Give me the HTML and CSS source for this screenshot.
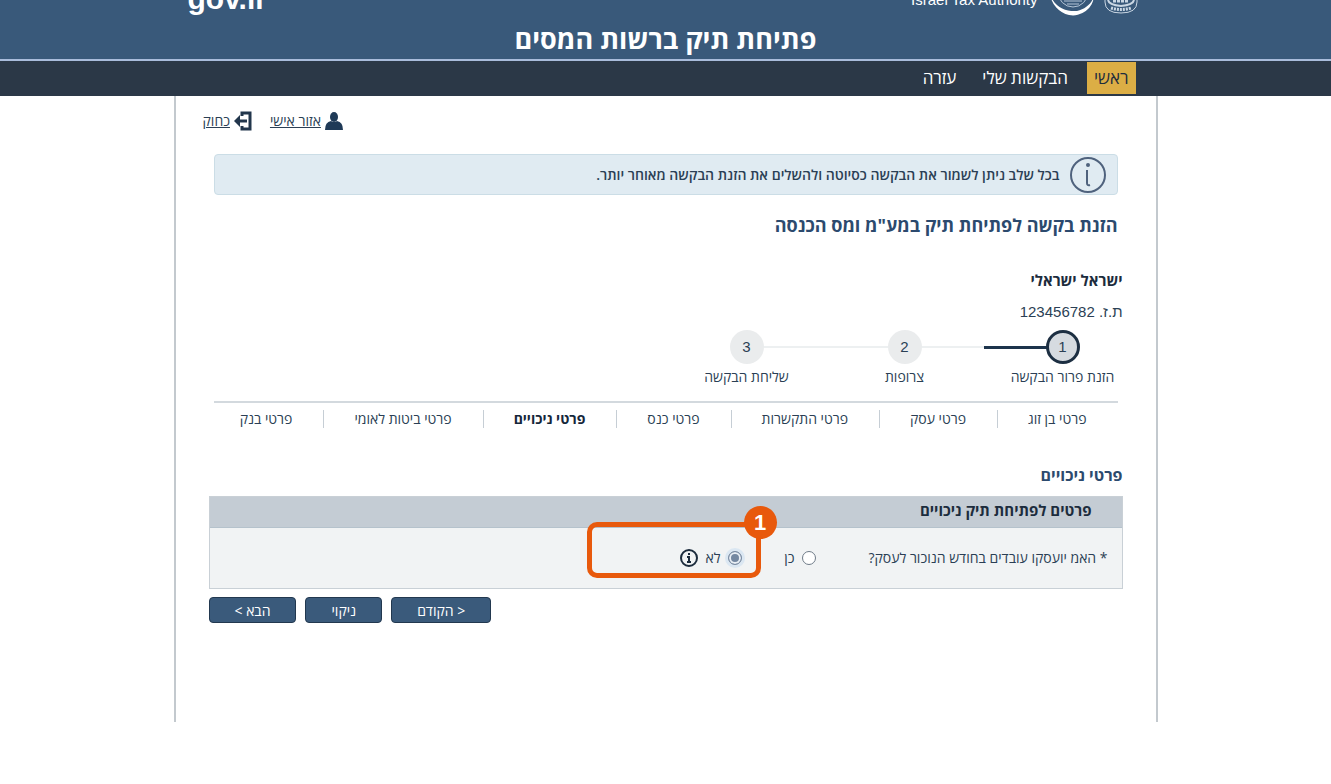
FILE: index.html
```html
<!DOCTYPE html>
<html lang="he" dir="rtl">
<head>
    <meta charset="UTF-8">
    <meta name="viewport" content="width=device-width, initial-scale=1.0">
    <title>פתיחת תיק ברשות המסים</title>
    <link rel="stylesheet" href="styles.css">
</head>
<body>
    <header class="header">
        <div class="brand">
            <div class="logos">
                <svg class="logo" width="34" height="46" viewBox="0 0 34 46">
                    <path d="M1 22 V32 Q1 43 17 43 Q33 43 33 32 V22" fill="none" stroke="#c9d6e3" stroke-width="1"/>
                    <path d="M4 30 Q5 35 17 36 Q29 35 30 30" fill="none" stroke="#c9d6e3" stroke-width="2"/>
                    <path d="M9 31 H25" stroke="#c9d6e3" stroke-width="3" stroke-dasharray="3 1"/>
                    <path d="M7 38 Q17 41 27 38" fill="none" stroke="#c9d6e3" stroke-width="3" stroke-dasharray="2 1"/>
                </svg>
                <svg class="logo" width="46" height="46" viewBox="0 0 46 46">
                    <circle cx="24" cy="22" r="15" fill="none" stroke="#b5c5d6" stroke-width="1"/>
                    <path d="M45 26 A21 21 0 0 1 20 45 A25 25 0 0 1 1 24 C5 37 17 42 28 41 C37 39 43 33 45 26 Z" fill="#fff"/>
                    <path d="M15 31 H33 M18 34 H30" stroke="#b5c5d6" stroke-width="1"/>
                </svg>
                <span class="authority" dir="ltr">Israel Tax Authority</span>
            </div>
            <span class="gov" dir="ltr">gov.il</span>
        </div>
        <h1>פתיחת תיק ברשות המסים</h1>
    </header>

    <nav class="nav">
        <div class="nav-inner">
            <a href="#" class="active">ראשי</a>
            <a href="#">הבקשות שלי</a>
            <a href="#">עזרה</a>
        </div>
    </nav>

    <main class="page">
        <div class="user-links">
            <a href="#">
                <svg width="18" height="18" viewBox="0 0 18 18">
                    <ellipse cx="9" cy="5" rx="4" ry="5" fill="#1f3a57"/>
                    <path d="M0 18 Q0 10 6 9 Q9 11 12 9 Q18 10 18 18 Z" fill="#1f3a57"/>
                </svg>
                <span>אזור אישי</span>
            </a>
            <a href="#">
                <svg width="18" height="20" viewBox="0 0 18 20">
                    <path d="M8 5 V2 H16 V18 H8 V15" fill="none" stroke="#22364c" stroke-width="3"/>
                    <path d="M4 10 H13" stroke="#22364c" stroke-width="3"/>
                    <path d="M6 4 V16 L0 10 Z" fill="#22364c"/>
                </svg>
                <span>כחוק</span>
            </a>
        </div>

        <div class="notice">
            <svg width="36" height="36" viewBox="0 0 36 36">
                <circle cx="18" cy="18" r="17" fill="none" stroke="#4f627d" stroke-width="2"/>
                <circle cx="18" cy="8" r="2" fill="#4f627d"/>
                <path d="M17 13 V26 Q17 29 20 28" fill="none" stroke="#4f627d" stroke-width="2"/>
            </svg>
            <p>בכל שלב ניתן לשמור את הבקשה כסיוטה ולהשלים את הזנת הבקשה מאוחר יותר.</p>
        </div>

        <h2 class="title">הזנת בקשה לפתיחת תיק במע"מ ומס הכנסה</h2>

        <div class="person">
            <strong>ישראל ישראלי</strong>
            <span class="id-number">ת.ז. 123456782</span>
        </div>

        <ol class="steps">
            <li class="current"><span class="num">1</span>הזנת פרור הבקשה</li>
            <li><span class="num">2</span>צרופות</li>
            <li><span class="num">3</span>שליחת הבקשה</li>
        </ol>

        <div class="tabs">
            <a href="#">פרטי בן זוג</a>
            <a href="#">פרטי עסק</a>
            <a href="#">פרטי התקשרות</a>
            <a href="#">פרטי כנס</a>
            <a href="#" class="selected">פרטי ניכויים</a>
            <a href="#">פרטי ביטות לאומי</a>
            <a href="#">פרטי בנק</a>
        </div>

        <form id="deductionsForm">
            <h3>פרטי ניכויים</h3>
            <section class="panel">
                <h4>פרטים לפתיחת תיק ניכויים</h4>
                <div class="question" role="radiogroup" aria-labelledby="employeesLabel">
                    <span id="employeesLabel" class="question-text">* האמ יועסקו עובדים בחודש הנוכור לעסק?</span>
                    <div class="option">
                        <input type="radio" id="yes" name="employees" value="yes">
                        <label for="yes">כן</label>
                    </div>
                    <div class="option marked">
                        <input type="radio" id="no" name="employees" value="no" checked>
                        <label for="no">לא</label>
                        <svg width="18" height="18" viewBox="0 0 18 18">
                            <circle cx="9" cy="9" r="8" fill="none" stroke="#1c2c3d" stroke-width="2"/>
                            <path d="M9 4 V6 M7 8 H9 V13 M7 13 H11" fill="none" stroke="#1c2c3d" stroke-width="2"/>
                        </svg>
                        <div class="highlight"><span class="badge">1</span></div>
                    </div>
                </div>
            </section>

            <div class="buttons">
                <button type="button">הבא &gt;</button>
                <button type="reset">ניקוי</button>
                <button type="button">&lt; הקודם</button>
            </div>
        </form>
    </main>
</body>
</html>
```
FILE: styles.css
```css
* {
    box-sizing: border-box;
}

body {
    margin: 0;
    background-color: #fff;
    font-family: "Open Sans", "Noto Sans", "Liberation Sans", sans-serif;
    font-size: 14px;
    line-height: 20px;
    color: #2b3f55;
}

h1, h2, h3, h4, p {
    margin: 0;
}

a {
    color: inherit;
    text-decoration: none;
}

svg {
    display: block;
    flex: none;
}

.header {
    background-color: #39597a;
    border-bottom: 2px solid #a9bcdb;
    color: #fff;
}

.brand {
    display: flex;
    justify-content: space-between;
    align-items: flex-end;
    max-width: 956px;
    height: 16px;
    margin: 0 auto;
    padding-right: 6px;
    overflow: hidden;
    font-family: "Liberation Sans", sans-serif;
}

.logos {
    display: flex;
    align-items: flex-end;
    gap: 9px;
}

.authority {
    padding: 0 2px 6px 0;
    font-size: 15px;
}

.gov {
    font-size: 30px;
    line-height: 34px;
    font-weight: bold;
}

h1 {
    height: 43px;
    font-size: 27px;
    line-height: 46px;
    text-align: center;
}

.nav {
    background-color: #2b3847;
}

.nav-inner {
    display: flex;
    gap: 12px;
    max-width: 944px;
    margin: 0 auto;
    padding: 1px 2px 2px;
}

.nav a {
    padding: 0 7px;
    color: #fff;
    font-size: 17px;
    line-height: 32px;
}

.nav .active {
    background-color: #dcae45;
    color: #1f2d3d;
}

.page {
    max-width: 984px;
    min-height: 626px;
    margin: 0 auto;
    border: solid #c3c9ce;
    border-width: 0 2px;
}

.user-links {
    display: flex;
    justify-content: flex-end;
    gap: 18px;
    padding: 15px 0 0 27px;
}

.user-links a {
    display: flex;
    align-items: center;
    gap: 4px;
    text-decoration: underline;
}

.notice {
    display: flex;
    align-items: center;
    gap: 10px;
    height: 41px;
    margin: 23px 38px 0;
    padding: 0 11px;
    background-color: #e0ebf2;
    border: 1px solid #cbdde6;
    border-radius: 4px;
    font-weight: 600;
}

.title {
    margin: 18px 38px 0;
    color: #2c4a6e;
    font-size: 18px;
    line-height: 24px;
}

.person {
    display: flex;
    flex-direction: column;
    gap: 12px;
    margin: 33px 33px 0;
    font-size: 15px;
}

.person strong {
    color: #1c2c3d;
}

.id-number,
.num,
.badge {
    font-family: "Liberation Sans", "Open Sans", sans-serif;
}

.steps {
    display: flex;
    margin: 8px 14px 0;
    padding: 0;
    list-style: none;
}

.steps li {
    position: relative;
    width: 158px;
    text-align: center;
}

.steps li::before {
    content: "";
    position: absolute;
    top: 16px;
    right: 0;
    width: 100%;
    height: 2px;
    background-color: #edf0f1;
}

.steps li:first-child::before,
.steps li:last-child::before {
    width: 50%;
}

.steps li:first-child::before {
    right: auto;
    left: 0;
}

.steps .current::before {
    height: 3px;
    background-color: #1d344c;
}

.num {
    display: block;
    position: relative;
    width: 34px;
    height: 34px;
    margin: 0 auto 3px;
    background-color: #eaeced;
    border-radius: 50%;
    font-size: 15px;
    line-height: 34px;
}

.current .num {
    background-color: #d6dbe0;
    border: 3px solid #1d2f42;
    line-height: 28px;
}

.tabs {
    display: flex;
    margin: 14px 38px 0;
    padding-top: 7px;
    border-top: 2px solid #d3d9de;
    white-space: nowrap;
}

.tabs a {
    padding: 0 31px 0 30px;
    border-left: 1px solid #c6ced5;
    line-height: 18px;
}

.tabs a:last-child {
    border-left: none;
}

.tabs .selected {
    color: #15263a;
    font-weight: bold;
}

form {
    margin: 35px 33px 0;
}

h3 {
    color: #2c4a6e;
    font-size: 16px;
    line-height: 24px;
}

.panel {
    margin-top: 9px;
    background-color: #f1f3f4;
    border: 1px solid #c9d0d6;
}

h4 {
    height: 31px;
    padding: 0 30px;
    background-color: #c4ccd4;
    border-bottom: 1px solid #b5c2cc;
    color: #1c2c3d;
    font-size: 15px;
    line-height: 26px;
}

.question {
    display: flex;
    align-items: center;
    height: 60px;
    padding: 0 14px;
}

.question-text {
    width: 292px;
}

.option {
    display: flex;
    align-items: center;
    gap: 7px;
    width: 74px;
}

.option input {
    appearance: none;
    flex: none;
    width: 14px;
    height: 14px;
    margin: 0;
    background-color: #fff;
    border: 1px solid #6f7b88;
    border-radius: 50%;
}

.option input:checked {
    border-color: #7c8da3;
    background-color: #7488a1;
    box-shadow: inset 0 0 0 2px #e8eef4, 0 0 0 3px #dbe7f2;
}

.marked {
    position: relative;
}

.highlight {
    position: absolute;
    top: -26px;
    right: -19px;
    width: 174px;
    height: 56px;
    border: 5px solid #e8590c;
    border-radius: 10px;
    pointer-events: none;
}

.badge {
    position: absolute;
    top: -21px;
    right: -21px;
    width: 33px;
    height: 33px;
    background-color: #e8590c;
    border-radius: 50%;
    color: #fff;
    font-size: 22px;
    font-weight: bold;
    line-height: 33px;
    text-align: center;
}

.buttons {
    display: flex;
    flex-direction: row-reverse;
    justify-content: flex-start;
    gap: 9px;
    margin-top: 8px;
}

button {
    height: 26px;
    padding: 0 25px;
    background-color: #3a5a7b;
    border: 1px solid #22384f;
    border-radius: 4px;
    color: #fff;
    font-family: inherit;
    font-size: 14px;
    cursor: pointer;
}
```
